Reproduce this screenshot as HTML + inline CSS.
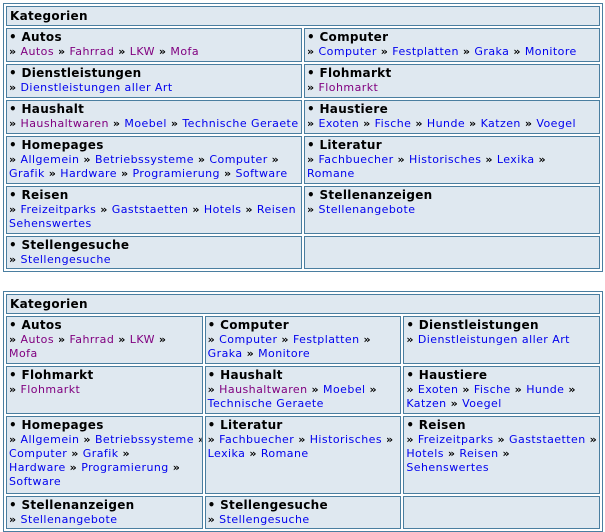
<!DOCTYPE html>
<html><head><meta charset="utf-8"><style>
body{margin:0;background:#fff;font-family:"DejaVu Sans","Liberation Sans",sans-serif;font-size:11px;}
table{position:absolute;left:3px;width:600px;border:1px solid #4a7ea0;border-spacing:2px;background:#fff;table-layout:fixed}
td{border:1px solid #4a7ea0;background:#dfe8f0;vertical-align:top;padding:1px 2px;line-height:14px;letter-spacing:0.45px;white-space:nowrap;overflow:hidden}
td.h{font-weight:bold;font-size:12px;padding:2px 3px;height:14px;letter-spacing:0.3px}
b{font-size:12px;display:block;line-height:15px;letter-spacing:0.3px}
i{font-style:normal;font-weight:bold}
a{color:#0000ee;text-decoration:none}
a.v{color:#800080}
</style></head><body>
<table style="top:3px">
<tr><td colspan="2" class="h">Kategorien</td></tr>
<tr style="height:34px"><td><b>• Autos</b><i>»</i> <a class="v">Autos</a> <i>»</i> <a class="v">Fahrrad</a> <i>»</i> <a class="v">LKW</a> <i>»</i> <a class="v">Mofa</a></td><td><b>• Computer</b><i>»</i> <a>Computer</a> <i>»</i> <a>Festplatten</a> <i>»</i> <a>Graka</a> <i>»</i> <a>Monitore</a></td></tr>
<tr style="height:34px"><td><b>• Dienstleistungen</b><i>»</i> <a>Dienstleistungen aller Art</a></td><td><b>• Flohmarkt</b><i>»</i> <a class="v">Flohmarkt</a></td></tr>
<tr style="height:34px"><td><b>• Haushalt</b><i>»</i> <a class="v">Haushaltwaren</a> <i>»</i> <a>Moebel</a> <i>»</i> <a>Technische Geraete</a></td><td><b>• Haustiere</b><i>»</i> <a>Exoten</a> <i>»</i> <a>Fische</a> <i>»</i> <a>Hunde</a> <i>»</i> <a>Katzen</a> <i>»</i> <a>Voegel</a></td></tr>
<tr style="height:48px"><td><b>• Homepages</b><i>»</i> <a>Allgemein</a> <i>»</i> <a>Betriebssysteme</a> <i>»</i> <a>Computer</a> <i>»</i><br><a>Grafik</a> <i>»</i> <a>Hardware</a> <i>»</i> <a>Programierung</a> <i>»</i> <a>Software</a></td><td><b>• Literatur</b><i>»</i> <a>Fachbuecher</a> <i>»</i> <a>Historisches</a> <i>»</i> <a>Lexika</a> <i>»</i><br><a>Romane</a></td></tr>
<tr style="height:48px"><td><b>• Reisen</b><i>»</i> <a>Freizeitparks</a> <i>»</i> <a>Gaststaetten</a> <i>»</i> <a>Hotels</a> <i>»</i> <a>Reisen</a> <i>»</i><br><a>Sehenswertes</a></td><td><b>• Stellenanzeigen</b><i>»</i> <a>Stellenangebote</a></td></tr>
<tr style="height:33px"><td><b>• Stellengesuche</b><i>»</i> <a>Stellengesuche</a></td><td></td></tr>
</table>
<table style="top:291px">
<tr><td colspan="3" class="h">Kategorien</td></tr>
<tr style="height:48px"><td><b>• Autos</b><i>»</i> <a class="v">Autos</a> <i>»</i> <a class="v">Fahrrad</a> <i>»</i> <a class="v">LKW</a> <i>»</i><br><a class="v">Mofa</a></td><td><b>• Computer</b><i>»</i> <a>Computer</a> <i>»</i> <a>Festplatten</a> <i>»</i><br><a>Graka</a> <i>»</i> <a>Monitore</a></td><td><b>• Dienstleistungen</b><i>»</i> <a>Dienstleistungen aller Art</a></td></tr>
<tr style="height:48px"><td><b>• Flohmarkt</b><i>»</i> <a class="v">Flohmarkt</a></td><td><b>• Haushalt</b><i>»</i> <a class="v">Haushaltwaren</a> <i>»</i> <a>Moebel</a> <i>»</i><br><a>Technische Geraete</a></td><td><b>• Haustiere</b><i>»</i> <a>Exoten</a> <i>»</i> <a>Fische</a> <i>»</i> <a>Hunde</a> <i>»</i><br><a>Katzen</a> <i>»</i> <a>Voegel</a></td></tr>
<tr style="height:78px"><td><b>• Homepages</b><i>»</i> <a>Allgemein</a> <i>»</i> <a>Betriebssysteme</a> <i>»</i><br><a>Computer</a> <i>»</i> <a>Grafik</a> <i>»</i><br><a>Hardware</a> <i>»</i> <a>Programierung</a> <i>»</i><br><a>Software</a></td><td><b>• Literatur</b><i>»</i> <a>Fachbuecher</a> <i>»</i> <a>Historisches</a> <i>»</i><br><a>Lexika</a> <i>»</i> <a>Romane</a></td><td><b>• Reisen</b><i>»</i> <a>Freizeitparks</a> <i>»</i> <a>Gaststaetten</a> <i>»</i><br><a>Hotels</a> <i>»</i> <a>Reisen</a> <i>»</i><br><a>Sehenswertes</a></td></tr>
<tr style="height:31px"><td><b>• Stellenanzeigen</b><i>»</i> <a>Stellenangebote</a></td><td><b>• Stellengesuche</b><i>»</i> <a>Stellengesuche</a></td><td></td></tr>
</table>
</body></html>
